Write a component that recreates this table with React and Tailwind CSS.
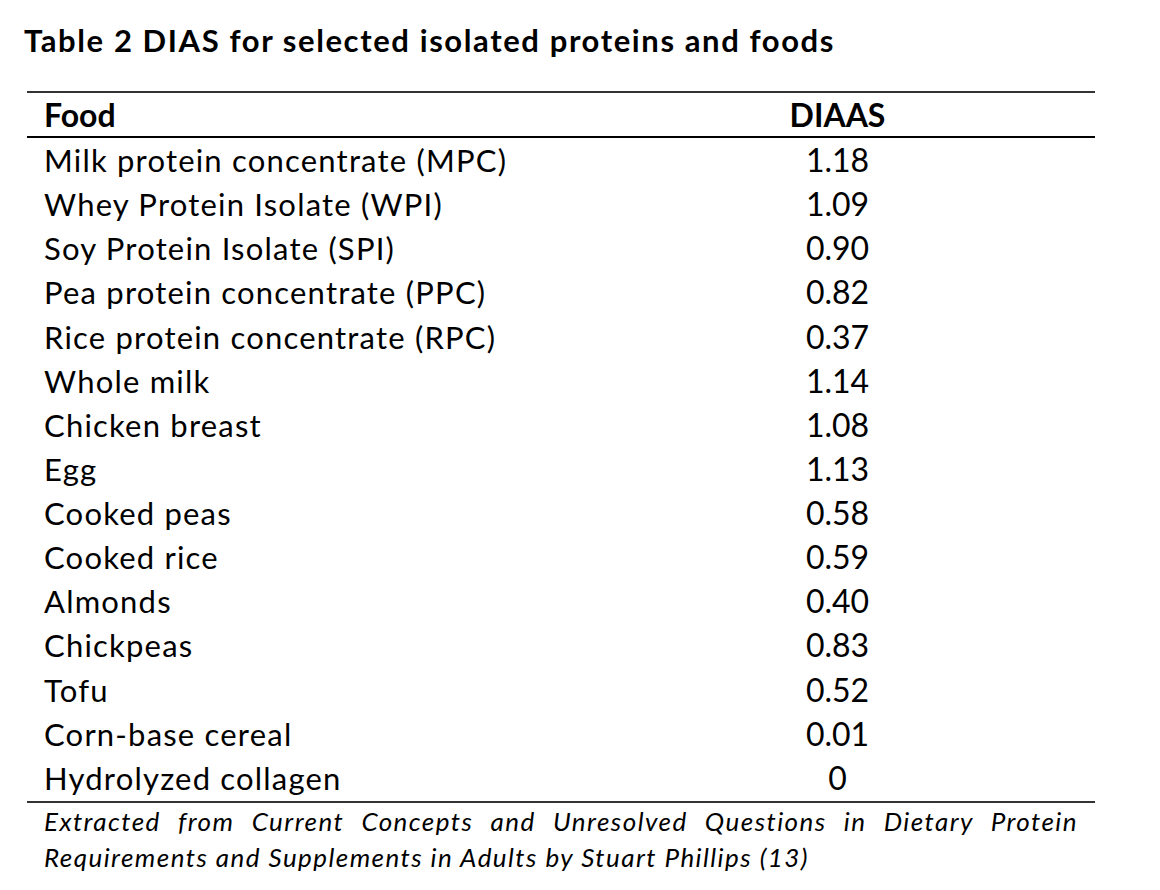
import React from "react";

const rows = [
  ["Milk protein concentrate (MPC)", "1.18"],
  ["Whey Protein Isolate (WPI)", "1.09"],
  ["Soy Protein Isolate (SPI)", "0.90"],
  ["Pea protein concentrate (PPC)", "0.82"],
  ["Rice protein concentrate (RPC)", "0.37"],
  ["Whole milk", "1.14"],
  ["Chicken breast", "1.08"],
  ["Egg", "1.13"],
  ["Cooked peas", "0.58"],
  ["Cooked rice", "0.59"],
  ["Almonds", "0.40"],
  ["Chickpeas", "0.83"],
  ["Tofu", "0.52"],
  ["Corn-base cereal", "0.01"],
  ["Hydrolyzed collagen", "0"],
];

export default function App() {
  return (
    <div
      className="w-[1160px] h-[890px] bg-white text-black overflow-hidden"
      style={{ fontFamily: "Lato, 'Open Sans', sans-serif" }}
    >
      <h1 className="pl-[24px] pt-[24px] h-[91px] text-[31px] leading-[32px] tracking-[1.6px] font-bold whitespace-nowrap">
        Table 2 DIAS for selected isolated proteins and foods
      </h1>

      <div className="ml-[27px] w-[1068px]">
        {/* header */}
        <div className="grid grid-cols-[553px_1fr] border-t-2 border-b-2 border-t-[#333] border-b-black h-[47px] items-center text-[32px] font-bold leading-[43px]">
          <div className="pl-[17px]">Food</div>
          <div className="text-center">DIAAS</div>
        </div>

        {/* body */}
        <div className="border-b-2 border-[#333] pb-[1px]">
          {rows.map(([food, score]) => (
            <div
              key={food}
              className="grid grid-cols-[553px_1fr] h-[44.14px] items-center leading-[44px]"
            >
              <div className="pl-[17px] whitespace-nowrap text-[31px] tracking-[1.2px]">{food}</div>
              <div className="text-center text-[32px]">{score}</div>
            </div>
          ))}
        </div>

        {/* source */}
        <p className="px-[17px] text-[26px] leading-[36px] tracking-[1.45px] italic text-justify">
          Extracted from Current Concepts and Unresolved Questions in Dietary Protein Requirements and Supplements in Adults by Stuart Phillips (13)
        </p>
      </div>
    </div>
  );
}
